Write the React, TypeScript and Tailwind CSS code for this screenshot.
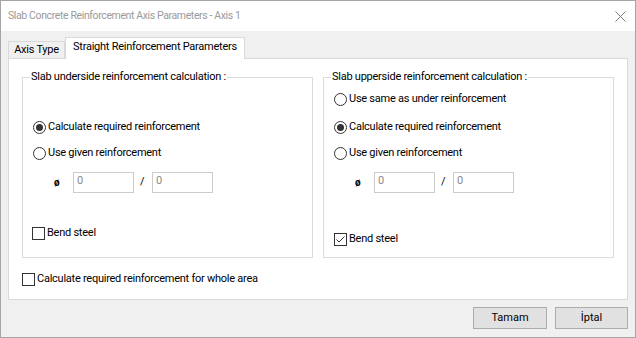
import React from "react";

const font = { fontFamily: "Roboto, 'Liberation Sans', sans-serif" };

function Radio({ checked, label }: { checked?: boolean; label: string }) {
  return (
    <div className="flex h-[16px] items-center">
      <span className="flex h-[13px] w-[13px] items-center justify-center rounded-full border border-[#333333] bg-white">
        {checked && <span className="h-[7px] w-[7px] rounded-full bg-[#333333]" />}
      </span>
      <span className="ml-[2px] text-[11px] tracking-[-0.25px] text-black">{label}</span>
    </div>
  );
}

function Check({ checked, label }: { checked?: boolean; label: string }) {
  return (
    <div className="flex h-[16px] items-center">
      <span className="flex h-[13px] w-[13px] items-center justify-center border border-[#333333] bg-white">
        {checked && (
          <svg width="11" height="11" viewBox="0 0 11 11">
            <path d="M1.5 5.5 L4 8 L9.5 2.5" fill="none" stroke="#333" strokeWidth="1" />
          </svg>
        )}
      </span>
      <span className="ml-[2px] text-[11px] tracking-[-0.25px] text-black">{label}</span>
    </div>
  );
}

function Inputs() {
  return (
    <div className="flex h-[21px] items-center">
      <span className="w-[40px] pl-[21px] text-[10px] font-bold text-black">ø</span>
      <div className="h-[21px] w-[61px] border border-[#cccccc] bg-white pl-[3px] text-[11px] leading-[16px] text-[#8a8a8a]">0</div>
      <span className="w-[18px] pl-[6px] text-[11px] text-black">/</span>
      <div className="h-[21px] w-[61px] border border-[#cccccc] bg-white pl-[3px] text-[11px] leading-[16px] text-[#8a8a8a]">0</div>
    </div>
  );
}

function Group({ title, children, pt }: { title: string; children: React.ReactNode; pt: string }) {
  return (
    <div className={`relative h-[181px] w-[291px] border border-[#dcdcdc] pl-[10px] ${pt}`}>
      <span className="absolute left-[7px] top-[-8px] bg-white px-[1px] text-[11px] leading-[14px] tracking-[-0.25px] text-black">{title}</span>
      {children}
    </div>
  );
}

export default function App() {
  return (
    <div style={font} className="flex h-[338px] w-[636px] flex-col border border-[#a5a5a5] bg-[#f0f0f0]">
      <div className="flex h-[30px] shrink-0 items-center justify-between bg-white pl-[7px] pr-[9px]">
        <span className="text-[10.5px] tracking-[-0.38px] text-[#9a9a9a]">Slab Concrete Reinforcement Axis Parameters - Axis 1</span>
        <svg width="11" height="11" viewBox="0 0 11 11">
          <path d="M0.5 0.5 L10.5 10.5 M10.5 0.5 L0.5 10.5" stroke="#7a7a7a" strokeWidth="1" />
        </svg>
      </div>
      <div className="flex flex-1 flex-col pl-[7px] pr-[7px]">
        <div className="flex h-[27px] items-end pt-[7px]">
          <div className="flex h-[17px] w-[57px] items-center justify-center border border-b-0 border-[#d9d9d9] bg-[#f0f0f0] text-[11px] tracking-[-0.25px] text-black">
            Axis Type
          </div>
          <div className="relative z-10 -mb-px flex h-[22px] w-[180px] items-center justify-center border border-b-0 border-[#d9d9d9] bg-white pb-[2px] text-[11px] tracking-[-0.25px] text-black">
            Straight Reinforcement Parameters
          </div>
        </div>
        <div className="h-[242px] w-[620px] border border-[#d9d9d9] bg-white pl-[13px] pt-[18px]">
          <div className="flex gap-[10px]">
            <Group title="Slab underside reinforcement calculation :" pt="pt-[41px]">
              <Radio checked label="Calculate required reinforcement" />
              <div className="mt-[10px]"><Radio label="Use given reinforcement" /></div>
              <div className="mt-[11px]"><Inputs /></div>
              <div className="mt-[32px] -ml-px"><Check label="Bend steel" /></div>
            </Group>
            <Group title="Slab upperside reinforcement calculation :" pt="pt-[13px]">
              <Radio label="Use same as under reinforcement" />
              <div className="mt-[12px]"><Radio checked label="Calculate required reinforcement" /></div>
              <div className="mt-[10px]"><Radio label="Use given reinforcement" /></div>
              <div className="mt-[11px]"><Inputs /></div>
              <div className="mt-[38px]"><Check checked label="Bend steel" /></div>
            </Group>
          </div>
          <div className="mt-[13px]">
            <Check label="Calculate required reinforcement for whole area" />
          </div>
        </div>
        <div className="flex justify-end gap-[8px] pt-[7px]">
          <button className="h-[22px] w-[74px] border border-[#adadad] bg-[#e1e1e1] text-[11px] font-normal text-black">Tamam</button>
          <button className="h-[22px] w-[73px] border border-[#adadad] bg-[#e1e1e1] text-[11px] font-normal text-black">İptal</button>
        </div>
      </div>
    </div>
  );
}
